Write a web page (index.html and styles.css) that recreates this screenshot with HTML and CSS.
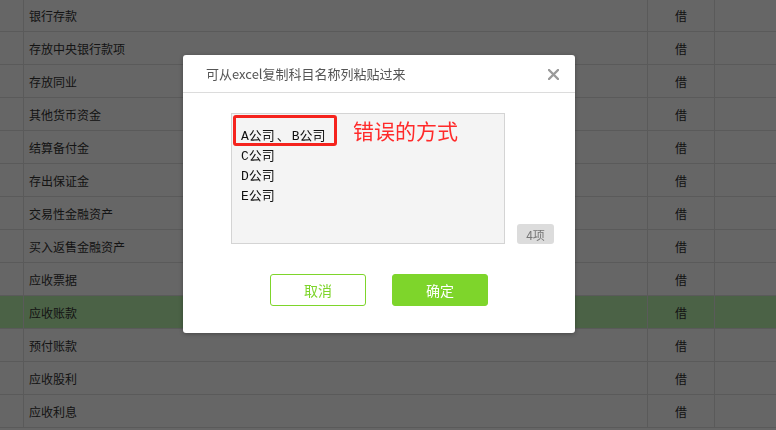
FILE: index.html
```html
<!DOCTYPE html>
<html lang="zh-CN">
<head>
<meta charset="utf-8">
<title>科目</title>
<link rel="stylesheet" href="styles.css">
</head>
<body>
<div class="grid">
  <div class="row"><div class="c idx"></div><div class="c name">银行存款</div><div class="c dir">借</div><div class="c last"></div></div>
  <div class="row"><div class="c idx"></div><div class="c name">存放中央银行款项</div><div class="c dir">借</div><div class="c last"></div></div>
  <div class="row"><div class="c idx"></div><div class="c name">存放同业</div><div class="c dir">借</div><div class="c last"></div></div>
  <div class="row"><div class="c idx"></div><div class="c name">其他货币资金</div><div class="c dir">借</div><div class="c last"></div></div>
  <div class="row"><div class="c idx"></div><div class="c name">结算备付金</div><div class="c dir">借</div><div class="c last"></div></div>
  <div class="row"><div class="c idx"></div><div class="c name">存出保证金</div><div class="c dir">借</div><div class="c last"></div></div>
  <div class="row"><div class="c idx"></div><div class="c name">交易性金融资产</div><div class="c dir">借</div><div class="c last"></div></div>
  <div class="row"><div class="c idx"></div><div class="c name">买入返售金融资产</div><div class="c dir">借</div><div class="c last"></div></div>
  <div class="row"><div class="c idx"></div><div class="c name">应收票据</div><div class="c dir">借</div><div class="c last"></div></div>
  <div class="row selected"><div class="c idx"></div><div class="c name">应收账款</div><div class="c dir">借</div><div class="c last"></div></div>
  <div class="row"><div class="c idx"></div><div class="c name">预付账款</div><div class="c dir">借</div><div class="c last"></div></div>
  <div class="row"><div class="c idx"></div><div class="c name">应收股利</div><div class="c dir">借</div><div class="c last"></div></div>
  <div class="row"><div class="c idx"></div><div class="c name">应收利息</div><div class="c dir">借</div><div class="c last"></div></div>
</div>

<div class="mask"></div>

<div class="dialog">
  <div class="dialog-head">
    <span class="dialog-title">可从excel复制科目名称列粘贴过来</span>
    <svg class="close" width="11" height="11" viewBox="0 0 11 11"><path d="M1 1L10 10M10 1L1 10" stroke="#9a9a9a" stroke-width="2.4" stroke-linecap="round"/></svg>
  </div>
  <div class="dialog-body">
    <div class="paste-row">
      <div class="paste-box">
        <div class="line">A公司<span class="dun">、</span>B公司</div>
        <div class="line">C公司</div>
        <div class="line">D公司</div>
        <div class="line">E公司</div>
      </div>
      <span class="count">4项</span>
      <div class="mark-box"></div>
      <div class="mark-text">错误的方式</div>
    </div>
    <div class="actions">
      <button class="btn btn-cancel">取消</button>
      <button class="btn btn-ok">确定</button>
    </div>
  </div>
</div>
</body>
</html>
```

FILE: styles.css
```css
html, body {
  margin: 0;
  padding: 0;
}
body {
  width: 776px;
  height: 430px;
  overflow: hidden;
  background: #fff;
  font-family: "Noto Sans CJK SC", "Noto Sans", sans-serif;
  position: relative;
}
.grid {
  margin-top: -1px;
}
.row {
  display: grid;
  grid-template-columns: 24px 624px 67px 1fr;
  height: 33px;
  box-sizing: border-box;
  border-bottom: 1px solid #e2e2e2;
  background: #fff;
}
.row.selected {
  background: #bcf4ae;
}
.c {
  border-right: 1px solid #e2e2e2;
  font-size: 12px;
  color: #333;
  display: flex;
  align-items: center;
}
.c.last { border-right: none; }
.name { padding-left: 5px; }
.dir { justify-content: center; }

.mask {
  position: fixed;
  inset: 0;
  background: rgba(0, 0, 0, 0.6);
}

.dialog {
  position: absolute;
  left: 183px;
  top: 55px;
  width: 392px;
  height: 278px;
  background: #fff;
  border-radius: 3px;
  box-shadow: 0 1px 4px rgba(0,0,0,0.3);
  display: flex;
  flex-direction: column;
}
.dialog-head {
  height: 37px;
  border-bottom: 1px solid #dcdcdc;
  display: flex;
  align-items: center;
  justify-content: space-between;
  padding: 0 16px 0 23px;
}
.dialog-title {
  font-size: 13px;
  color: #555;
}
.close { display: block; margin-top: 1px; }

.dialog-body {
  padding: 20px 0 0 48px;
}
.paste-row {
  display: flex;
  align-items: flex-end;
  gap: 12px;
  position: relative;
}
.paste-box {
  width: 274px;
  height: 131px;
  box-sizing: border-box;
  background: #f4f4f4;
  border: 1px solid #d4d4d4;
  padding: 13px 9px;
  font-family: "Liberation Mono", "Noto Sans CJK SC", monospace;
  font-size: 13px;
  color: #111;
}
.line {
  height: 20px;
  line-height: 20px;
}
.dun {
  display: inline-block;
  width: 17px;
  text-align: center;
}
.count {
  width: 37px;
  height: 20px;
  background: #dcdcdc;
  border-radius: 3px;
  font-size: 12px;
  color: #777;
  display: flex;
  align-items: center;
  justify-content: center;
}
.mark-box {
  position: absolute;
  left: 2px;
  top: 2px;
  width: 104px;
  height: 31px;
  box-sizing: border-box;
  border: 3px solid #f5231d;
  border-radius: 3px;
}
.mark-text {
  position: absolute;
  left: 122px;
  top: 2px;
  font-size: 21px;
  line-height: 30px;
  color: #ff2a2a;
}

.actions {
  display: flex;
  gap: 26px;
  margin: 30px 0 0 39px;
}
.btn {
  width: 96px;
  height: 32px;
  box-sizing: border-box;
  border-radius: 3px;
  font-family: "Noto Sans CJK SC", sans-serif;
  font-size: 14px;
  padding: 0;
  cursor: pointer;
}
.btn-cancel {
  background: #fff;
  border: 1px solid #7ed52b;
  color: #7ed52b;
}
.btn-ok {
  background: #7ed52b;
  border: 1px solid #7ed52b;
  color: #fff;
}
```
